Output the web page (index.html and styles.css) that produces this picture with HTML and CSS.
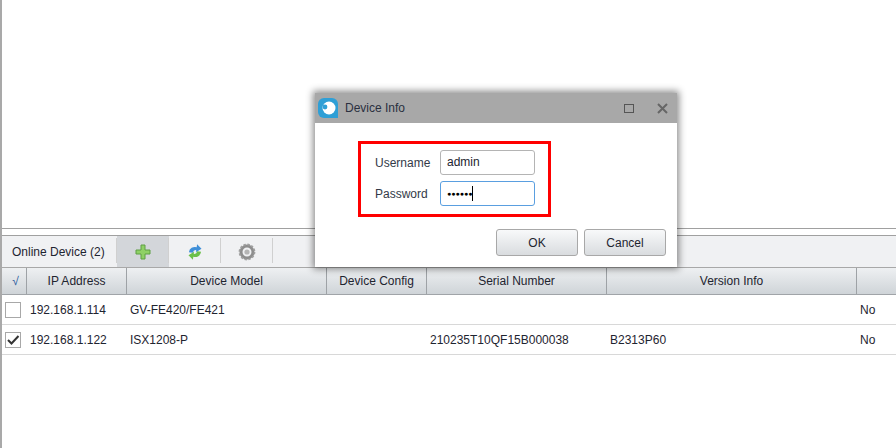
FILE: index.html
```html
<!DOCTYPE html>
<html lang="en">
<head>
    <meta charset="UTF-8">
    <title>Device Info</title>
    <link rel="stylesheet" href="styles.css">
</head>
<body>
    <div class="page">
        <div class="top-area"></div>
        <div class="splitter"></div>

        <div class="toolbar">
            <div class="toolbar-title">Online Device (2)</div>
            <div class="tool-btn active">
                <svg width="20" height="20" viewBox="0 0 20 20">
                    <path d="M8 3h4v5h5v4h-5v5H8v-5H3V8h5z" fill="#8fd166" stroke="#5f9f45" stroke-width="1"/>
                </svg>
            </div>
            <div class="tool-btn">
                <svg width="20" height="20" viewBox="0 0 20 20">
                    <path d="M4 11a6 6 0 0 1 7-6V2l5 4-5 4V8a3 3 0 0 0-3 3z" fill="#3f8fd8" transform="rotate(8 10 10)"/>
                    <path d="M16 9a6 6 0 0 1-7 6v3l-5-4 5-4v2a3 3 0 0 0 3-3z" fill="#6cc04a" transform="rotate(8 10 10)"/>
                </svg>
            </div>
            <div class="tool-btn">
                <svg width="20" height="20" viewBox="0 0 20 20">
                    <circle cx="10" cy="10" r="6" fill="none" stroke="#8e8e8e" stroke-width="3"/>
                    <circle cx="10" cy="10" r="7.6" fill="none" stroke="#a0a0a0" stroke-width="1.6" stroke-dasharray="2.4 1.6"/>
                    <circle cx="10" cy="10" r="2.6" fill="#b5b5b5"/>
                </svg>
            </div>
        </div>

        <div class="table">
            <div class="row head">
                <div class="cell c-check center tick">√</div>
                <div class="cell c-ip center">IP Address</div>
                <div class="cell c-model center">Device Model</div>
                <div class="cell c-config center">Device Config</div>
                <div class="cell c-serial center">Serial Number</div>
                <div class="cell c-version center">Version Info</div>
                <div class="cell c-last"></div>
            </div>
            <div class="row">
                <div class="cell c-check"><span class="checkbox"></span></div>
                <div class="cell c-ip">192.168.1.114</div>
                <div class="cell c-model">GV-FE420/FE421</div>
                <div class="cell c-config"></div>
                <div class="cell c-serial"></div>
                <div class="cell c-version"></div>
                <div class="cell c-last">No</div>
            </div>
            <div class="row">
                <div class="cell c-check">
                    <span class="checkbox">
                        <svg width="14" height="14" viewBox="0 0 14 14">
                            <path d="M2 7l3.5 3.5L12.5 3" fill="none" stroke="#333" stroke-width="2"/>
                        </svg>
                    </span>
                </div>
                <div class="cell c-ip">192.168.1.122</div>
                <div class="cell c-model">ISX1208-P</div>
                <div class="cell c-config"></div>
                <div class="cell c-serial">210235T10QF15B000038</div>
                <div class="cell c-version">B2313P60</div>
                <div class="cell c-last">No</div>
            </div>
        </div>
    </div>

    <div class="dialog">
        <div class="dialog-title">
            <svg class="dialog-logo" width="20" height="20" viewBox="0 0 20 20">
                <path d="M6 0h8a6 6 0 0 1 6 6v14H6a6 6 0 0 1-6-6V6a6 6 0 0 1 6-6z" fill="#2f9fd6"/>
                <circle cx="11" cy="10" r="6.5" fill="#fff"/>
                <circle cx="7" cy="9" r="2.4" fill="#2f9fd6"/>
            </svg>
            <span class="dialog-name">Device Info</span>
            <span class="win-max"></span>
            <svg class="win-close" width="11" height="11" viewBox="0 0 11 11">
                <path d="M1 1l9 9M10 1l-9 9" stroke="#666" stroke-width="2" fill="none"/>
            </svg>
        </div>
        <div class="dialog-body">
            <div class="login-box">
                <div class="form-row">
                    <label>Username</label>
                    <div class="input">admin</div>
                </div>
                <div class="form-row">
                    <label>Password</label>
                    <div class="input focused"><span class="dots">●●●●●●</span><span class="caret"></span></div>
                </div>
            </div>
            <div class="dialog-buttons">
                <button class="btn">OK</button>
                <button class="btn">Cancel</button>
            </div>
        </div>
    </div>
</body>
</html>
```

FILE: styles.css
```css
html, body {
    margin: 0;
    height: 100%;
    overflow: hidden;
}

body {
    font-family: "Liberation Sans", Arial, sans-serif;
    font-size: 12px;
    color: #1e2430;
    background-color: #fff;
}

.page {
    height: 448px;
    box-sizing: border-box;
    border-left: 2px solid #a9a9a9;
}

.top-area {
    height: 228px;
}

.splitter {
    height: 6px;
    border-top: 1px solid #a0a0a0;
    border-bottom: 1px solid #a0a0a0;
    background-color: #fff;
}

.toolbar {
    display: flex;
    height: 32px;
    background-color: #f0f1f3;
    border-bottom: 1px solid #a8a8a8;
    box-sizing: border-box;
}

.toolbar-title {
    width: 115px;
    padding-left: 10px;
    box-sizing: border-box;
    line-height: 33px;
    border-right: 1px solid #d0d0d0;
    margin: 2px 0 4px;
    line-height: 29px;
}

.tool-btn {
    width: 52px;
    display: flex;
    align-items: center;
    justify-content: center;
    position: relative;
    margin-left: 0;
}

.tool-btn::after {
    content: "";
    position: absolute;
    right: 0;
    top: 2px;
    bottom: 4px;
    width: 1px;
    background-color: #d0d0d0;
}

.tool-btn.active {
    background-color: #d3d6da;
}

.row {
    display: flex;
    height: 30px;
    border-bottom: 1px solid #d8d8d8;
    box-sizing: border-box;
    align-items: center;
}

.row.head {
    height: 27px;
    background: linear-gradient(#eef0f2, #cfd4d8);
    border-bottom: 1px solid #a0a4a8;
    align-items: stretch;
}

.cell {
    box-sizing: border-box;
    padding-left: 3px;
    white-space: nowrap;
}

.head .cell {
    border-right: 1px solid #9ea2a6;
    line-height: 26px;
    padding-left: 0;
}

.center {
    text-align: center;
}

.tick {
    color: #2b5a9c;
}

.c-check { width: 25px; }
.c-ip { width: 100px; }
.c-model { width: 200px; }
.c-config { width: 100px; }
.c-serial { width: 180px; }
.c-version { width: 250px; }
.c-last { flex: 1; }

.row .c-check {
    padding-left: 3px;
}

.row .c-last {
    border-right: none;
}

.checkbox {
    display: flex;
    width: 14px;
    height: 14px;
    border: 1px solid #a8a8a8;
    background-color: #fff;
}

.dialog {
    position: absolute;
    left: 315px;
    top: 93px;
    width: 362px;
    height: 174px;
    background-color: #fff;
    box-shadow: 0 0 7px 2px rgba(0,0,0,0.45);
}

.dialog-title {
    display: flex;
    align-items: center;
    height: 30px;
    background-color: #a8a8a8;
    padding-left: 3px;
}

.dialog-name {
    margin-left: 7px;
    flex: 1;
    color: #2a3040;
}

.win-max {
    width: 8px;
    height: 7px;
    border: 1px solid #555;
    margin-right: 23px;
}

.win-close {
    margin-right: 9px;
}

.dialog-body {
    padding: 18px 11px 0 43px;
}

.login-box {
    width: 193px;
    height: 76px;
    box-sizing: border-box;
    border: 3px solid #ff0000;
    padding: 6px 0 0 14px;
    display: flex;
    flex-direction: column;
    gap: 6px;
}

.form-row {
    display: flex;
    align-items: center;
}

.form-row label {
    width: 65px;
    color: #333a48;
}

.input {
    width: 95px;
    height: 25px;
    box-sizing: border-box;
    border: 1px solid #b4b4b4;
    border-radius: 3px;
    padding-left: 6px;
    line-height: 23px;
    display: flex;
    align-items: center;
}

.input.focused {
    border-color: #5a9fe0;
}

.dots {
    font-size: 7px;
    letter-spacing: 0;
    color: #000;
}

.caret {
    width: 1px;
    height: 15px;
    background-color: #000;
}

.dialog-buttons {
    display: flex;
    justify-content: flex-end;
    gap: 6px;
    margin-top: 12px;
}

.btn {
    width: 82px;
    height: 27px;
    border: 1px solid #a8a8a8;
    border-radius: 3px;
    background: linear-gradient(#f8f9fa, #d9dcdf);
    font-family: "Liberation Sans", Arial, sans-serif;
    font-size: 12px;
    color: #1e2430;
}
```
